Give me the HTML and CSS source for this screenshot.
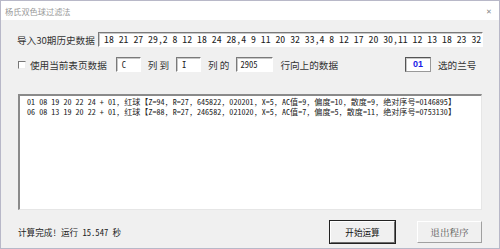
FILE: index.html
```html
<!DOCTYPE html>
<html lang="zh-CN">
<head>
    <meta charset="UTF-8">
    <title>杨氏双色球过滤法</title>
    <link rel="stylesheet" href="styles.css">
</head>
<body>
    <div class="window">
        <div class="titlebar">
            <span class="title">杨氏双色球过滤法</span>
            <span class="close">&#x2715;</span>
        </div>
        <div class="content">
            <div class="row row-history">
                <span class="label">导入30期历史数据</span>
                <div class="field field-history">18 21 27 29,2 8 12 18 24 28,4 9 11 20 32 33,4 8 12 17 20 30,11 12 13 18 23 32</div>
            </div>
            <div class="row row-sheet">
                <span class="check"></span>
                <span class="label label-check">使用当前表页数据</span>
                <div class="field field-col">C</div>
                <span class="label">列 到</span>
                <div class="field field-col">I</div>
                <span class="label">列 的</span>
                <div class="field field-rows">2905</div>
                <span class="label">行向上的数据</span>
                <div class="field field-pick">01</div>
                <span class="label">选的兰号</span>
            </div>
            <div class="output">
                <div class="line">01 08 19 20 22 24 + 01, 红球【Z=94, R=27, 645822, 020201, X=5, AC值=9, 偏度=10, 散度=9, 绝对序号=0146895】</div>
                <div class="line">06 08 13 19 20 22 + 01, 红球【Z=88, R=27, 246582, 021020, X=5, AC值=7, 偏度=5, 散度=11, 绝对序号=0753130】</div>
            </div>
            <div class="footer">
                <span class="status">计算完成! 运行 15.547 秒</span>
                <button class="btn btn-default">开始运算</button>
                <button class="btn btn-exit">退出程序</button>
            </div>
        </div>
    </div>
</body>
</html>
```

FILE: styles.css
```css
* {
    box-sizing: border-box;
}
body {
    margin: 0;
    font-family: "Noto Sans CJK SC", "Noto Sans", sans-serif;
    color: #222;
}
.window {
    width: 500px;
    height: 249px;
    border: 1px solid #b8b8c8;
    background: #f0f0f0;
    display: flex;
    flex-direction: column;
}
.titlebar {
    height: 19px;
    background: #fff;
    display: flex;
    align-items: center;
    justify-content: space-between;
    padding: 0 7px 0 4px;
}
.title {
    font-size: 8.2px;
    color: #999;
}
.close {
    font-size: 7px;
    color: #888;
}
.content {
    flex: 1;
    padding: 12px 16px 0 16px;
    display: flex;
    flex-direction: column;
}
.row {
    display: flex;
    align-items: center;
}
.label {
    font-size: 9.6px;
    line-height: 12px;
    color: #333;
    white-space: nowrap;
}
.field {
    height: 15px;
    background: #fff;
    border: 1px solid;
    border-color: #7a7a7a #fff #fff #7a7a7a;
    box-shadow: inset 1px 1px 0 #c8c8c8;
    font-family: "Noto Sans Mono CJK SC", "Liberation Mono", monospace;
    font-size: 8.5px;
    line-height: 13px;
    padding: 0 5px;
    white-space: nowrap;
    overflow: hidden;
    color: #222;
}
.row-history .label {
    width: 81px;
}
.field-history {
    flex: 1;
    font-size: 9.8px;
    padding-left: 5px;
}
.row-sheet {
    margin-top: 10px;
    gap: 7px;
}
.check {
    width: 8px;
    height: 8px;
    border: 1px solid;
    border-color: #777 #eee #eee #777;
    background: #fff;
    margin-left: 1px;
}
.label-check {
    margin-left: -3px;
    margin-right: 2px;
}
.field-col {
    width: 25px;
}
.field-rows {
    width: 37px;
    padding-left: 3px;
}
.field-pick {
    width: 26px;
    margin-left: 60px;
    border-color: #555 #999 #999 #555;
    color: #1a1ae6;
    font-family: "Liberation Sans", sans-serif;
    font-weight: bold;
    font-size: 9px;
    text-align: center;
}
.output {
    margin-top: 22px;
    margin-left: 1px;
    margin-right: 1px;
    height: 116px;
    background: #fff;
    border-top: 2px solid #8a8a8a;
    border-left: 2px solid #8a8a8a;
    border-right: 1px solid #e6e6e6;
    border-bottom: 1px solid #e6e6e6;
    padding: 1px 0 0 7px;
    font-family: "Noto Sans Mono CJK SC", "Liberation Mono", monospace;
    font-size: 8.1px;
    line-height: 10px;
    overflow: hidden;
}
.line {
    white-space: nowrap;
}
.footer {
    margin-top: 11px;
    display: flex;
    align-items: center;
}
.status {
    font-family: "Noto Sans Mono CJK SC", "Liberation Mono", monospace;
    font-size: 8.6px;
    flex: 1;
    padding-left: 1px;
}
.btn {
    width: 65px;
    height: 22px;
    background: #f0f0f0;
    border: 1px solid;
    border-color: #fff #6a6a6a #6a6a6a #fff;
    font-family: "Noto Sans CJK SC", sans-serif;
    font-size: 8.6px;
    color: #111;
    padding: 0;
}
.btn-default {
    outline: 1px solid #222;
    outline-offset: 0;
    margin-right: 22px;
}
.btn-exit {
    font-family: "Noto Serif CJK SC", "Noto Sans CJK SC", serif;
    font-size: 9.6px;
    color: #555;
    border-color: #fff #a0a0a0 #a0a0a0 #fff;
    margin-right: 1px;
}
```
